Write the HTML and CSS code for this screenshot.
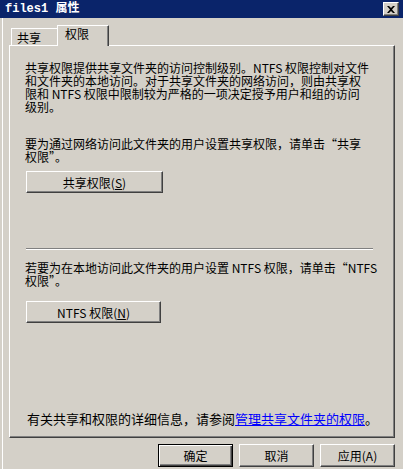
FILE: index.html
```html
<!DOCTYPE html>
<html lang="zh-CN">
<head>
  <meta charset="UTF-8" />
  <meta name="viewport" content="width=device-width, initial-scale=1.0" />
  <title>files1 属性</title>
  <link rel="stylesheet" href="styles.css">
</head>
<body>
  <div class="titlebar">
    <span class="title">files1 属性</span>
    <span class="close">
      <svg width="8" height="7" viewBox="0 0 8 7">
        <path d="M0 0h2l2 2 2-2h2L5 3.5 8 7H6L4 5 2 7H0l3-3.5z" fill="#000" />
      </svg>
    </span>
  </div>

  <div class="dialog">
    <div class="tabs">
      <div class="tab">共享</div>
      <div class="tab active">权限</div>
    </div>

    <div class="panel">
      <p class="text intro">共享权限提供共享文件夹的访问控制级别。NTFS 权限控制对文件<br>和文件夹的本地访问。对于共享文件夹的网络访问，则由共享权<br>限和 NTFS 权限中限制较为严格的一项决定授予用户和组的访问<br>级别。</p>

      <p class="text share-hint">要为通过网络访问此文件夹的用户设置共享权限，请单击“共享<br>权限”。</p>
      <button class="btn wide">共享权限(<u>S</u>)</button>

      <hr class="sep" />

      <p class="text ntfs-hint">若要为在本地访问此文件夹的用户设置 NTFS 权限，请单击“NTFS<br>权限”。</p>
      <button class="btn wide ntfs">NTFS 权限(<u>N</u>)</button>

      <p class="note">有关共享和权限的详细信息，请参阅<a href="#">管理共享文件夹的权限</a>。</p>
    </div>

    <div class="actions">
      <button class="btn default">确定</button>
      <button class="btn">取消</button>
      <button class="btn">应用(A)</button>
    </div>
  </div>
</body>
</html>
```

FILE: styles.css
```css
* {
  box-sizing: border-box;
}

body {
  margin: 0;
  width: 403px;
  height: 469px;
  overflow: hidden;
  background: #d4d0c8;
  font-family: "Noto Sans CJK SC", "Noto Sans", sans-serif;
  font-size: 12px;
  line-height: 13px;
  color: #000;
}

/* window caption */
.titlebar {
  height: 18px;
  background: #0a246a;
  display: flex;
  align-items: center;
  justify-content: space-between;
  padding: 0 4px 0 5px;
}

.title {
  color: #fff;
  font-weight: bold;
  font-family: "Liberation Mono", "Noto Sans CJK SC", monospace;
  font-size: 12px;
}

.close {
  width: 16px;
  height: 14px;
  background: #d4d0c8;
  border: 1px solid;
  border-color: #fff #404040 #404040 #fff;
  box-shadow: inset -1px -1px #808080;
  display: flex;
  align-items: center;
  justify-content: center;
}

.dialog {
  margin-left: 2px;
  border-left: 1px solid #fff;
  padding: 7px 8px 0 6px;
  height: 451px;
}

/* tab strip */
.tabs {
  height: 20px;
  display: flex;
  align-items: flex-end;
  padding-left: 2px;
}

.tab {
  height: 17px;
  width: 48px;
  border-top: 1px solid #fff;
  border-left: 1px solid #fff;
  border-right: 1px solid #404040;
  padding: 2px 0 0 5px;
}

.tab.active {
  height: 21px;
  width: 52px;
  margin-left: -2px;
  margin-bottom: -1px;
  padding: 1px 0 0 7px;
  position: relative;
  z-index: 1;
  background: #d4d0c8;
  box-shadow: inset -1px 0 #808080;
}

.panel {
  height: 393px;
  display: flex;
  flex-direction: column;
  align-items: flex-start;
  padding: 15px 15px 11px;
  border: 1px solid;
  border-color: #fff #404040 #404040 #fff;
  box-shadow: inset -1px -1px #808080;
}

.text {
  margin: 0;
  white-space: nowrap;
}

.share-hint {
  margin-top: 24px;
}

.ntfs-hint {
  margin-top: 11px;
}

.sep {
  align-self: stretch;
  margin: 55px 6px 0 1px;
  border: 0;
  border-top: 1px solid #808080;
  border-bottom: 1px solid #fff;
  height: 2px;
}

/* classic 3d push button */
.btn {
  font: inherit;
  color: #000;
  background: #d4d0c8;
  border: 1px solid;
  border-color: #fff #404040 #404040 #fff;
  box-shadow: inset -1px -1px #808080;
  width: 75px;
  height: 23px;
  padding: 0;
  display: flex;
  align-items: center;
  justify-content: center;
}

.btn.wide {
  width: 137px;
  height: 22px;
  margin: 8px 0 0 1px;
}

.btn.ntfs {
  width: 135px;
  margin-top: 14px;
}

.btn.default {
  border: 1px solid #000;
  box-shadow: inset 1px 1px #fff, inset -1px -1px #404040, inset -2px -2px #808080;
}

.note {
  margin: auto 0 0 2px;
  font-size: 13px;
  line-height: 15px;
  white-space: nowrap;
}

.note a {
  color: #0000ff;
  text-decoration: underline;
}

.actions {
  display: flex;
  justify-content: flex-end;
  gap: 6px;
  margin-top: 6px;
}
```
